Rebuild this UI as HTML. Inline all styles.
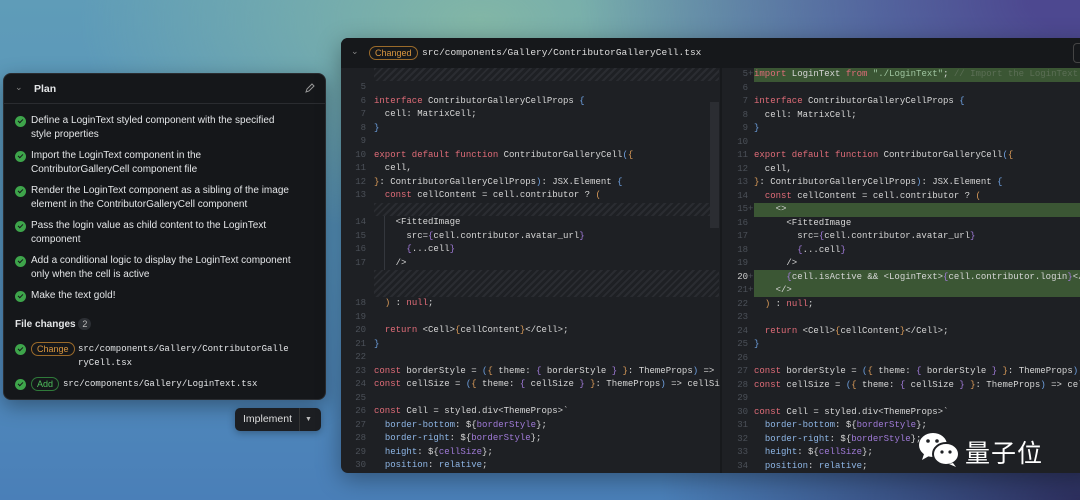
<!DOCTYPE html>
<html><head><meta charset="utf-8"><style>
*{margin:0;padding:0;box-sizing:border-box}
body{width:1080px;height:500px;overflow:hidden;position:relative;font-family:"Liberation Sans",sans-serif;
background:
radial-gradient(ellipse 420px 260px at 1080px 500px,#2d2f5e 0%,rgba(45,47,94,0) 100%),
radial-gradient(ellipse 500px 300px at 1080px 0px,#4d4890 10%,rgba(77,72,144,0) 100%),
radial-gradient(ellipse 400px 220px at 480px 20px,#82b6a6 0%,rgba(130,182,166,0) 100%),
linear-gradient(180deg,#5f9cb8 0%,#5592bd 50%,#4a7fb8 100%);}
.plan{position:absolute;left:3px;top:73px;width:323px;height:327px;background:#15171a;border-radius:8px;border:1px solid #2a2c30;box-shadow:0 6px 20px rgba(0,0,0,.35);color:#e4e6e8;font-size:10px}
.ph{height:30px;border-bottom:1px solid #2a2c30;position:relative}
.ph b{position:absolute;left:30px;top:9px;font-size:10.5px;font-weight:bold}
.chev{position:absolute;left:11px;top:8px;color:#888;font-size:9px}
.item{position:absolute;left:27px;line-height:14px;width:270px}
.ck{position:absolute;left:11px;width:11px;height:11px;border-radius:50%;background:#3ea54b}
.ck:after{content:"";position:absolute;left:3px;top:2.5px;width:4px;height:2px;border-left:1.5px solid #15171a;border-bottom:1.5px solid #15171a;transform:rotate(-45deg)}
.mono{font-family:"Liberation Mono",monospace}
.badge{display:inline-block;border-radius:8px;font-size:9px;padding:0 5px;line-height:12px}
.code{position:absolute;left:341px;top:38px;width:760px;height:435px;background:#1e2024;border-radius:7px;overflow:hidden;box-shadow:0 6px 24px rgba(0,0,0,.35)}
.hdr{height:30px;background:#16181b;position:relative;color:#ddd;font-size:10px}
.l{position:absolute;height:13.5px;line-height:13.5px;font-family:"Liberation Mono",monospace;font-size:9px;color:#d6d6d6;white-space:pre}
.n{position:absolute;width:20px;text-align:right;font-family:"Liberation Mono",monospace;font-size:9px;color:#4b5058;line-height:13.5px}
.hatch{position:absolute;left:33px;width:345px;background:repeating-linear-gradient(135deg,#2a2c31 0 2px,#1e2024 2px 5px)}
.add{position:absolute;left:413px;width:360px;height:13.5px;background:#3b5634}
.k{color:#e06c78}.b{color:#6ea0e0}.o{color:#d99a58}.p{color:#a07ad8}.s{color:#9fc5a0}.c{color:#5b6e55}.a{color:#8eb6e6}
</style></head><body>

<div class="plan">
 <div class="ph"><span class="chev">&#8964;</span><b>Plan</b>
 <svg style="position:absolute;right:10px;top:9px" width="11" height="11" viewBox="0 0 11 11"><path d="M2 9l1-3 5-5 2 2-5 5z" fill="none" stroke="#999" stroke-width="1"/></svg></div>
 <span class="ck" style="top:42px"></span><div class="item" style="top:40px">Define a LoginText styled component with the specified<br>style properties</div>
 <span class="ck" style="top:77px"></span><div class="item" style="top:75px">Import the LoginText component in the<br>ContributorGalleryCell component file</div>
 <span class="ck" style="top:112px"></span><div class="item" style="top:110px">Render the LoginText component as a sibling of the image<br>element in the ContributorGalleryCell component</div>
 <span class="ck" style="top:147px"></span><div class="item" style="top:145px">Pass the login value as child content to the LoginText<br>component</div>
 <span class="ck" style="top:182px"></span><div class="item" style="top:180px">Add a conditional logic to display the LoginText component<br>only when the cell is active</div>
 <span class="ck" style="top:217px"></span><div class="item" style="top:215px">Make the text gold!</div>
 <div class="item" style="top:244px;left:11px;font-weight:bold">File changes <span class="badge" style="background:#2c2f34;color:#bbb;font-weight:normal;padding:0 4px">2</span></div>
 <span class="ck" style="top:270px"></span>
 <div class="item" style="top:268px"><span class="badge" style="border:1px solid #9a6a2a;color:#d9963f">Change</span></div>
 <div class="item mono" style="top:268px;left:74px;font-size:9px">src/components/Gallery/ContributorGalle<br>ryCell.tsx</div>
 <span class="ck" style="top:305px"></span>
 <div class="item" style="top:303px"><span class="badge" style="border:1px solid #2f7a3a;color:#4fbf5d">Add</span></div>
 <div class="item mono" style="top:303px;left:59px;font-size:9px">src/components/Gallery/LoginText.tsx</div>
</div>
<div style="position:absolute;left:235px;top:408px;width:86px;height:23px;background:#1c1e22;border-radius:5px;color:#ddd;font-size:10.5px;line-height:23px;box-shadow:0 2px 8px rgba(0,0,0,.3)"><span style="margin-left:8px">Implement</span><span style="position:absolute;left:64px;top:0;width:1px;height:23px;background:#333"></span><span style="position:absolute;left:70px;font-size:7px;color:#bbb">&#9660;</span></div>

<div class="code">
 <div class="hdr"><span style="position:absolute;left:10px;top:8px;color:#888;font-size:9px">&#8964;</span>
 <span class="badge" style="position:absolute;left:28px;top:8px;border:1px solid #9a6a2a;color:#d9963f">Changed</span>
 <span class="mono" style="position:absolute;left:81px;top:9px;font-size:9.5px">src/components/Gallery/ContributorGalleryCell.tsx</span>
 <span style="position:absolute;left:732px;top:5px;width:20px;height:20px;border:1px solid #444;border-radius:4px"></span></div>

 <div class="hatch" style="top:30px;height:13px"></div>
 <div class="hatch" style="top:165px;height:13px"></div>
 <div class="hatch" style="top:232px;height:27px"></div>
 <div style="position:absolute;left:369px;top:64px;width:9px;height:126px;background:#2b2d32"></div>
 <div style="position:absolute;left:43px;top:178px;width:1px;height:54px;background:#34373d"></div>

 <div class="n" style="left:5px;top:43px">5<br>6<br>7<br>8<br>9<br>10<br>11<br>12<br>13</div>
 <div class="n" style="left:5px;top:178px">14<br>15<br>16<br>17</div>
 <div class="n" style="left:5px;top:259px">18<br>19<br>20<br>21<br>22<br>23<br>24<br>25<br>26<br>27<br>28<br>29<br>30</div>
 <div class="l" style="left:33px;top:43px">
<span class="k">interface</span> ContributorGalleryCellProps <span class="b">{</span>
  cell: MatrixCell;
<span class="b">}</span>

<span class="k">export default function</span> ContributorGalleryCell<span class="b">(</span><span class="o">{</span>
  cell,
<span class="o">}</span>: ContributorGalleryCellProps<span class="b">)</span>: JSX.Element <span class="b">{</span>
  <span class="k">const</span> cellContent = cell.contributor ? <span class="o">(</span></div>
 <div class="l" style="left:33px;top:178px">    &lt;FittedImage
      src=<span class="p">{</span>cell.contributor.avatar_url<span class="p">}</span>
      <span class="p">{</span>...cell<span class="p">}</span>
    /&gt;</div>
 <div class="l" style="left:33px;top:259px">  <span class="o">)</span> : <span class="k">null</span>;

  <span class="k">return</span> &lt;Cell&gt;<span class="o">{</span>cellContent<span class="o">}</span>&lt;/Cell&gt;;
<span class="b">}</span>

<span class="k">const</span> borderStyle = <span class="b">(</span><span class="o">{</span> theme: <span class="p">{</span> borderStyle <span class="p">}</span> <span class="o">}</span>: ThemeProps<span class="b">)</span> =&gt;
<span class="k">const</span> cellSize = <span class="b">(</span><span class="o">{</span> theme: <span class="p">{</span> cellSize <span class="p">}</span> <span class="o">}</span>: ThemeProps<span class="b">)</span> =&gt; cellSi

<span class="k">const</span> Cell = styled.div&lt;ThemeProps&gt;`
  <span class="a">border-bottom</span>: ${<span class="p">borderStyle</span>};
  <span class="a">border-right</span>: ${<span class="p">borderStyle</span>};
  <span class="a">height</span>: ${<span class="p">cellSize</span>};
  <span class="a">position</span>: <span class="a">relative</span>;</div>

 <div style="position:absolute;left:379px;top:30px;width:2px;height:410px;background:#17191c"></div>
 <div class="add" style="top:30px"></div>
 <div class="add" style="top:165px"></div>
 <div class="add" style="top:232px;height:27px"></div>
 <div class="n" style="left:387px;top:30px">5<br>6<br>7<br>8<br>9<br>10<br>11<br>12<br>13<br>14<br>15<br>16<br>17<br>18<br>19<br><span style="color:#ccc">20</span><br>21<br>22<br>23<br>24<br>25<br>26<br>27<br>28<br>29<br>30<br>31<br>32<br>33<br>34</div>
 <div class="n" style="left:407px;top:30px;width:6px;text-align:left">+<br><br><br><br><br><br><br><br><br><br>+<br><br><br><br><br>+<br>+</div>
 <div class="l" style="left:413px;top:30px"><span class="k">import</span> LoginText <span class="k">from</span> <span class="s">"./LoginText"</span>; <span class="c">// Import the LoginText</span>

<span class="k">interface</span> ContributorGalleryCellProps <span class="b">{</span>
  cell: MatrixCell;
<span class="b">}</span>

<span class="k">export default function</span> ContributorGalleryCell<span class="b">(</span><span class="o">{</span>
  cell,
<span class="o">}</span>: ContributorGalleryCellProps<span class="b">)</span>: JSX.Element <span class="b">{</span>
  <span class="k">const</span> cellContent = cell.contributor ? <span class="o">(</span>
    &lt;&gt;
      &lt;FittedImage
        src=<span class="p">{</span>cell.contributor.avatar_url<span class="p">}</span>
        <span class="p">{</span>...cell<span class="p">}</span>
      /&gt;
      <span class="p">{</span>cell.isActive &amp;&amp; &lt;LoginText&gt;<span class="p">{</span>cell.contributor.login<span class="p">}</span>&lt;/LoginText&gt;
    &lt;/&gt;
  <span class="o">)</span> : <span class="k">null</span>;

  <span class="k">return</span> &lt;Cell&gt;<span class="o">{</span>cellContent<span class="o">}</span>&lt;/Cell&gt;;
<span class="b">}</span>

<span class="k">const</span> borderStyle = <span class="b">(</span><span class="o">{</span> theme: <span class="p">{</span> borderStyle <span class="p">}</span> <span class="o">}</span>: ThemeProps<span class="b">)</span> =&gt;
<span class="k">const</span> cellSize = <span class="b">(</span><span class="o">{</span> theme: <span class="p">{</span> cellSize <span class="p">}</span> <span class="o">}</span>: ThemeProps<span class="b">)</span> =&gt; cellSize

<span class="k">const</span> Cell = styled.div&lt;ThemeProps&gt;`
  <span class="a">border-bottom</span>: ${<span class="p">borderStyle</span>};
  <span class="a">border-right</span>: ${<span class="p">borderStyle</span>};
  <span class="a">height</span>: ${<span class="p">cellSize</span>};
  <span class="a">position</span>: <span class="a">relative</span>;</div>
</div>

<svg style="position:absolute;left:918px;top:432px" width="44" height="36" viewBox="0 0 44 36">
<ellipse cx="15" cy="13" rx="14" ry="12" fill="#fff"/><path d="M6 22l-2 6 7-4z" fill="#fff"/>
<ellipse cx="28" cy="22" rx="13" ry="11" fill="#fff" stroke="#1e2024" stroke-width="2"/><path d="M35 31l3 4-7-3z" fill="#fff"/>
<circle cx="10" cy="9" r="1.8" fill="#1e2024"/><circle cx="19" cy="9" r="1.8" fill="#1e2024"/>
<circle cx="24" cy="20" r="1.6" fill="#1e2024"/><circle cx="32" cy="20" r="1.6" fill="#1e2024"/></svg>
<div style="position:absolute;left:965px;top:434px;color:#fff;font-size:25px;font-family:'Liberation Sans','Noto Sans CJK SC',sans-serif;letter-spacing:1px">量子位</div>
</body></html>
